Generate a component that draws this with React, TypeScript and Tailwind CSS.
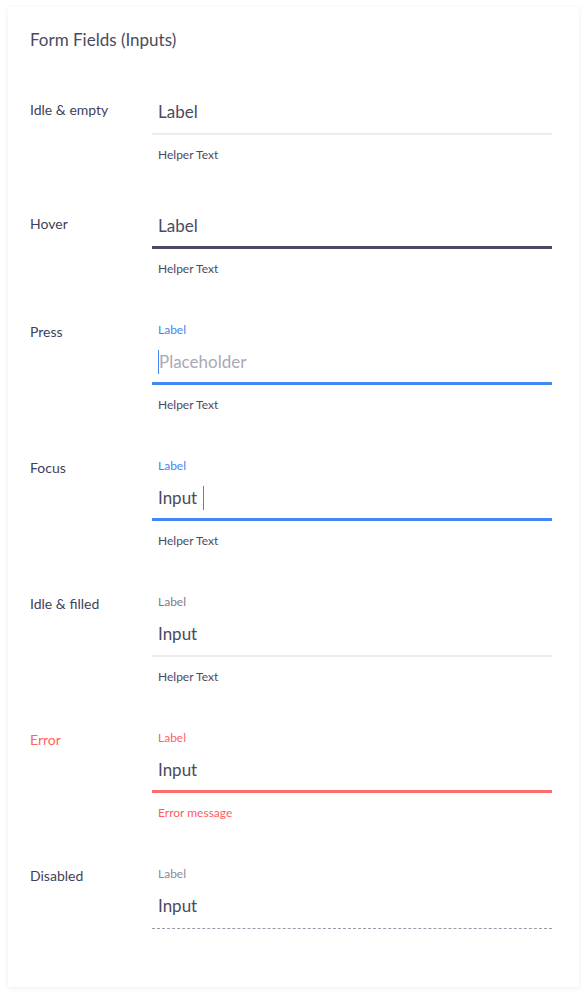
import React from "react";

type Row = {
  name: string;
  nameColor?: string;
  label?: string;
  labelColor?: string;
  value: string;
  valueColor?: string;
  cursor?: "before" | "after";
  line: string;
  helper?: string;
  helperColor?: string;
  mt: string;
};

const TEXT = "text-[#4a4a5e]";

function Field({ r }: { r: Row }) {
  return (
    <div className="flex items-start">
      <div className={`w-[122px] shrink-0 text-[14px] leading-5 ${r.nameColor ?? "text-[#3f3f58]"}`}>{r.name}</div>
      <div className="w-[400px] flex flex-col">
        {r.label && (
          <div className={`pl-[6px] text-[12px] leading-4 ${r.labelColor}`}>{r.label}</div>
        )}
        <div className={`${r.label ? "pt-[12px]" : ""} ${r.line}`}>
          <div className={`pl-[6px] h-6 flex items-center text-[17px] leading-6 ${r.valueColor ?? TEXT}`}>
            {r.cursor === "before" && <span className="w-px h-[24px] bg-[#4287f5]" />}
            <span>{r.value}</span>
            {r.cursor === "after" && <span className="w-px h-[24px] bg-[#4287f5] ml-[6px]" />}
          </div>
        </div>
        {r.helper && (
          <div className={`mt-3 pl-[6px] text-[12px] leading-4 ${r.helperColor ?? TEXT}`}>{r.helper}</div>
        )}
      </div>
    </div>
  );
}

const rows: Row[] = [
  { name: "Idle & empty", value: "Label", line: "pb-[9px] border-b-2 border-[#ebebf0]", helper: "Helper Text", mt: "mt-[51px]" },
  { name: "Hover", value: "Label", line: "pb-[8px] border-b-[3px] border-[#4a4a68]", helper: "Helper Text", mt: "mt-[51px]" },
  { name: "Press", label: "Label", labelColor: "text-[#4287f5]", value: "Placeholder", valueColor: "text-[#a9a9b4]", cursor: "before", line: "pb-[8px] border-b-[3px] border-[#4287f5]", helper: "Helper Text", mt: "mt-[45px]" },
  { name: "Focus", label: "Label", labelColor: "text-[#4287f5]", value: "Input", cursor: "after", line: "pb-[8px] border-b-[3px] border-[#4287f5]", helper: "Helper Text", mt: "mt-[45px]" },
  { name: "Idle & filled", label: "Label", labelColor: "text-[#7c7c90]", value: "Input", line: "pb-[9px] border-b-2 border-[#ebebf0]", helper: "Helper Text", mt: "mt-[45px]" },
  { name: "Error", nameColor: "text-[#ff6363]", label: "Label", labelColor: "text-[#ff6363]", value: "Input", line: "pb-[8px] border-b-[3px] border-[#ff6b6b]", helper: "Error message", helperColor: "text-[#ff5c5c]", mt: "mt-[45px]" },
  { name: "Disabled", label: "Label", labelColor: "text-[#8a8a9c]", value: "Input", line: "pb-[10px] border-b border-dashed border-[#9a9aa8]", mt: "mt-[45px]" },
];

export default function App() {
  return (
    <div className="min-h-[998px] bg-white pt-[7px] pl-[8px]" style={{ fontFamily: "Lato, 'Noto Sans', sans-serif" }}>
      <div className="w-[571px] h-[980px] bg-white shadow-[0_1px_5px_rgba(0,0,0,0.07)] pl-[22px] pt-[21px]">
        <div className={`text-[17px] leading-6 ${TEXT}`}>Form Fields (Inputs)</div>
        <div className="flex flex-col">
          {rows.map((r, i) => (
            <div key={r.name} className={i === 0 ? "mt-[48px]" : r.mt}>
              <Field r={r} />
            </div>
          ))}
        </div>
      </div>
    </div>
  );
}
